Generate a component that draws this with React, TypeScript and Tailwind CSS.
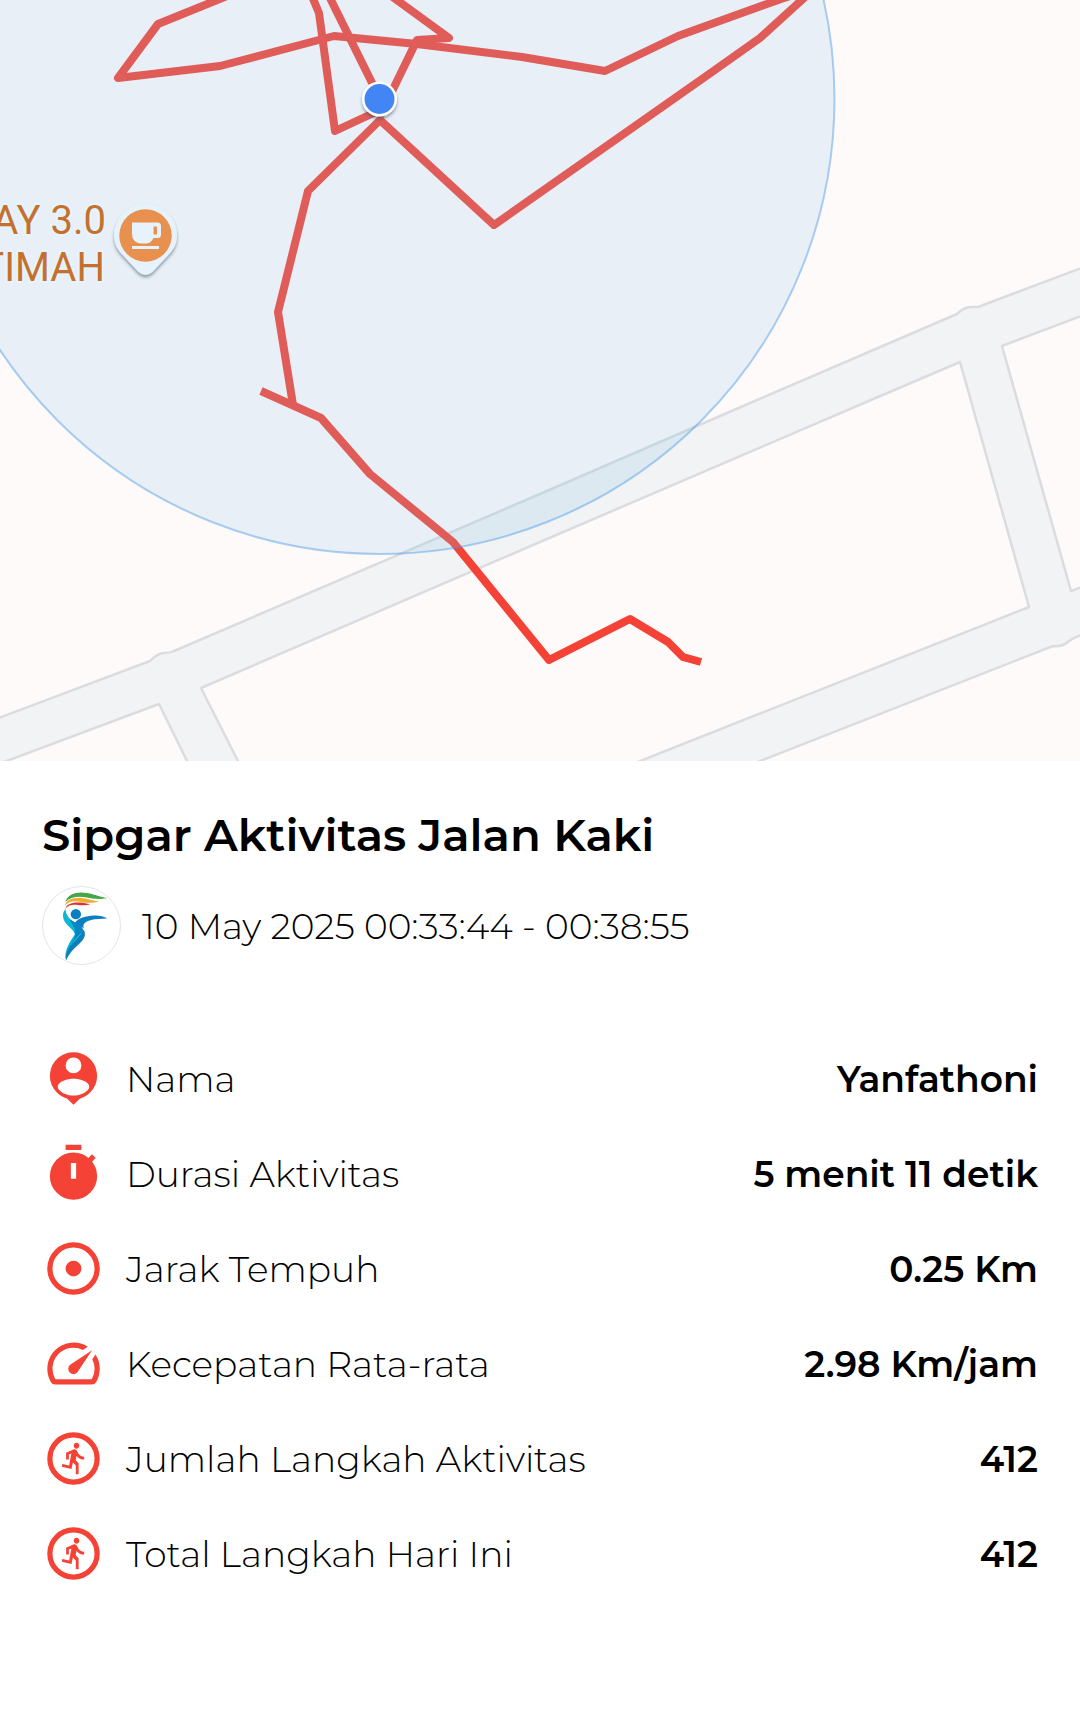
import type { ReactNode } from "react";

const ROUTES = [
  "232,-6 158,24 118,78 220,66 334,36 417,44 522,57 605,71 678,36 781,-1 815,-12 760,38 712,72 494,225 380,120 308,191 278,312 293,405",
  "311,-6 319,13 335,131 380,110",
  "329,-4 380,99",
  "390,-5 449,38 417,40 380,116",
  "261,391 321,418 370,474 453,542 549,660 630,619 668,642 683,657 701,662",
];

const BLOCKS = [
  "M-4 719L150 661Q158 653 164 653Q170 653 174 651L540 494L757 400L957 314Q964 307 971 307L978 307L1084 267V-4H-4Z",
  "M-4 765L159 704L190 767Z",
  "M241 767L201 688L540 542L871 400L960 362L1029 607L630 765Z",
  "M1084 315L1002 346L1071 591L1084 586Z",
  "M750 765L1053 646Q1063 647 1069 641Q1075 637 1084 634V765Z",
];

function RouteMap() {
  return (
    <svg viewBox="0 0 1080 761" className="block h-auto w-full bg-[#f1f3f4]" role="img" aria-label="Peta rute aktivitas">
      <defs>
        <filter id="soft-shadow" x="-30%" y="-30%" width="160%" height="160%">
          <feDropShadow dx="0" dy="2.500" stdDeviation="1.800" floodColor="#33475b" floodOpacity="0.500" />
        </filter>
      </defs>
      <g fill="#fffafa" stroke="#dadce0" strokeWidth="2.500" strokeLinejoin="round">
        {BLOCKS.map((d) => (
          <path key={d} d={d} />
        ))}
      </g>
      <g fill="none" stroke="#f44336" strokeWidth="8" strokeLinejoin="round">
        {ROUTES.map((points) => (
          <polyline key={points} points={points} />
        ))}
      </g>
      <circle cx="379.500" cy="99" r="455" fill="#8bc3e6" fillOpacity="0.200" stroke="#4a98e6" strokeOpacity="0.450" strokeWidth="2" />
      <g filter="url(#soft-shadow)">
        <circle cx="379.500" cy="99" r="17.500" fill="#fff" />
      </g>
      <circle cx="379.500" cy="99" r="15" fill="#4285f4" />

      <g
        fontFamily="Roboto, sans-serif"
        fontSize="40"
        textAnchor="end"
        fill="#c5702d"
        stroke="#e6f3fc"
        strokeWidth="5"
        strokeLinejoin="round"
        paintOrder="stroke"
      >
        <text x="106" y="234">AY 3.0</text>
        <text x="105" y="281">TIMAH</text>
      </g>

      <path
        filter="url(#soft-shadow)"
        d="M145.500 204a31.500 31.500 0 0 0-31.500 31.500c0 9 4 15 10 21l14.500 15.500q7 6 14 0l14.500-15.500c6-6 10-12 10-21a31.500 31.500 0 0 0-31.500-31.500z"
        fill="#e6f3fc"
      />
      <circle cx="145.500" cy="235.500" r="26.250" fill="#e8914f" />
      <path
        fill="#e6f3fc"
        fillRule="evenodd"
        d="M132 222.500h25.500q3.500 0 3.500 3.500v8.500q0 3.500-3.500 3.500h-4q-2.500 5.500-8 5.500h-4.500q-9-1-9-10zM153.500 226.500v8h3.500v-8zM132 246h27v3h-27z"
      />
    </svg>
  );
}

function Logo() {
  return (
    <svg viewBox="36 31 238 238" className="size-[79px] shrink-0" role="img" aria-label="Logo Sipgar">
      <circle cx="155" cy="150" r="117.500" fill="#fff" stroke="#c8c8c8" strokeWidth="1.500" />
      <path d="M106 79C114 54 142 47 171 52C196 56 213 65 234 67C213 72 191 71 171 66C145 60 121 65 106 79Z" fill="#46a64a" />
      <path d="M105 91C109 73 128 65 155 67C176 69 189 76 208 77C190 84 172 82 154 79C132 75 116 77 105 91Z" fill="#f0ad2e" />
      <path d="M106 101C109 85 128 79 151 81C163 82 170 85 181 86C167 91 156 89 142 88C123 87 113 91 106 101Z" fill="#db3535" />
      <circle cx="138" cy="116" r="15.500" fill="#0a7fc1" />
      <path d="M135 142C144 128 169 121 192 120C209 119 222 123 233 128C216 131 198 129 181 134C163 140 158 147 162 158C153 154 143 150 135 142Z" fill="#0a7fc1" />
      <path d="M107 100C96 111 97 128 108 143C118 156 132 164 135 176C124 193 110 211 106 240C117 211 145 190 160 166C157 147 130 143 116 125C110 117 107 109 107 100Z" fill="#0db6d2" />
      <path d="M119 133C139 142 159 151 160 165C147 181 130 193 118 214C131 194 139 179 135 171C139 158 127 150 119 133Z" fill="#0a86c5" />
      <path d="M162 162C170 180 162 192 149 204C133 219 116 235 109 255C104 244 108 229 119 214C132 198 149 184 162 162Z" fill="#0b7ebd" />
    </svg>
  );
}

function Icon({ children }: { children: ReactNode }) {
  return (
    <svg viewBox="0 0 24 24" className="size-[63px] shrink-0" fill="#f44336" aria-hidden="true">
      {children}
    </svg>
  );
}

const personIcon = (
  <Icon>
    <path d="M12 2a9 9 0 0 0-2.400 17.670L12 22l2.400-2.330A9 9 0 0 0 12 2z" />
    <circle cx="12" cy="7" r="3" fill="#fff" />
    <path d="M6 15.100c0-2 3.900-3 6-3s6 1 6 3c0 1.700-3.300 3.400-6 3.400s-6-1.700-6-3.400z" fill="#fff" />
  </Icon>
);

const timerIcon = (
  <Icon>
    <path d="M9 1h6v2H9zM19.050 4.700l1.400 1.400-2.300 2.300-1.400-1.400z" />
    <circle cx="12" cy="13" r="9" />
    <path d="M11 8h2v6h-2z" fill="#fff" />
  </Icon>
);

const distanceIcon = (
  <Icon>
    <circle cx="12" cy="12" r="9" fill="none" stroke="#f44336" strokeWidth="2" />
    <circle cx="12" cy="12" r="3" />
  </Icon>
);

const speedIcon = (
  <Icon>
    <path d="m20.380 8.570-1.230 1.850a8 8 0 0 1-.220 7.580H5.070A8 8 0 0 1 15.580 6.850l1.850-1.230A10 10 0 0 0 3.350 19a2 2 0 0 0 1.720 1h13.850a2 2 0 0 0 1.740-1 10 10 0 0 0-.270-10.440zm-9.790 6.840a2 2 0 0 0 2.830 0l5.660-8.490-8.490 5.660a2 2 0 0 0 0 2.830z" />
  </Icon>
);

const stepsIcon = (
  <Icon>
    <circle cx="12" cy="12" r="9" fill="none" stroke="#f44336" strokeWidth="2" />
    <path
      transform="translate(6 5.200) scale(.53 .555)"
      d="M13.490 5.480c1.100 0 2-.9 2-2s-.9-2-2-2-2 .9-2 2 .9 2 2 2zm-3.600 13.900 1-4.400 2.100 2v6h2v-7.500l-2.100-2 .6-3c1.300 1.500 3.300 2.500 5.500 2.500v-2c-1.900 0-3.500-1-4.300-2.400l-1-1.600c-.4-.6-1-1-1.700-1-.3 0-.5.1-.8.1l-5.200 2.200v4.700h2v-3.400l1.800-.7-1.600 8.100-4.900-1-.4 2 7 1.400z"
    />
  </Icon>
);

const STATS = [
  { icon: personIcon, label: "Nama", value: "Yanfathoni" },
  { icon: timerIcon, label: "Durasi Aktivitas", value: "5 menit 11 detik" },
  { icon: distanceIcon, label: "Jarak Tempuh", value: "0.25 Km" },
  { icon: speedIcon, label: "Kecepatan Rata-rata", value: "2.98 Km/jam" },
  { icon: stepsIcon, label: "Jumlah Langkah Aktivitas", value: "412" },
  { icon: stepsIcon, label: "Total Langkah Hari Ini", value: "412" },
];

export default function App() {
  return (
    <main className="min-h-screen bg-white font-[Montserrat,Inter,sans-serif] text-black">
      <RouteMap />
      <section className="px-[42px] pt-11">
        <h1 className="text-[45px] leading-[60px] font-semibold">Sipgar Aktivitas Jalan Kaki</h1>
        <div className="mt-[21px] flex items-center gap-[21px]">
          <Logo />
          <p className="text-[36px] leading-[44px] font-light">10 May 2025 00:33:44 - 00:38:55</p>
        </div>
        <dl className="mt-[82px] flex flex-col gap-8">
          {STATS.map(({ icon, label, value }) => (
            <div key={label} className="flex items-center justify-between gap-4">
              <dt className="flex items-center gap-[21px] text-[36px] leading-[44px] font-light">
                {icon}
                {label}
              </dt>
              <dd className="text-right text-[36px] leading-[44px] font-semibold">{value}</dd>
            </div>
          ))}
        </dl>
      </section>
    </main>
  );
}
